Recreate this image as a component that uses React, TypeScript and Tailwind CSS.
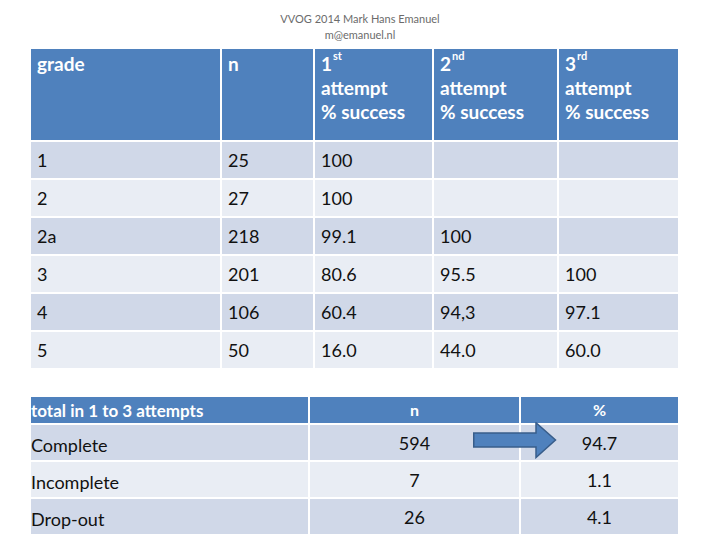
import React from "react";

const font = { fontFamily: "Lato, 'Open Sans', sans-serif" };

const rows = [
  ["1", "25", "100", "", ""],
  ["2", "27", "100", "", ""],
  ["2a", "218", "99.1", "100", ""],
  ["3", "201", "80.6", "95.5", "100"],
  ["4", "106", "60.4", "94,3", "97.1"],
  ["5", "50", "16.0", "44.0", "60.0"],
];

function Attempt({ num, sup }: { num: string; sup: string }) {
  return (
    <div className="bg-[#4f81bd] text-white font-bold text-[19px] leading-[24px] pt-[3px] pl-[6px]">
      <div>
        {num}
        <sup className="text-[11px] font-bold relative top-[-3px] ml-[1px] align-top leading-[14px]">{sup}</sup>
      </div>
      <div>attempt</div>
      <div>% success</div>
    </div>
  );
}

export default function App() {
  return (
    <div className="w-[720px] h-[540px] bg-white overflow-hidden relative" style={font}>
      <div className="pt-[11px] text-center text-[11px] leading-[16px] text-[#6b6b6b]">
        <div>VVOG 2014 Mark Hans Emanuel</div>
        <div>m@emanuel.nl</div>
      </div>

      <div className="pl-[31px] mt-[6px]">
        <div className="grid grid-cols-[189px_91px_117px_123px_119px] grid-rows-[91px_36px_36px_36px_36px_36px_36px] gap-[2px] w-[647px]">
          <div className="bg-[#4f81bd] text-white font-bold text-[19px] leading-[24px] pt-[3px] pl-[6px]">grade</div>
          <div className="bg-[#4f81bd] text-white font-bold text-[19px] leading-[24px] pt-[3px] pl-[6px]">n</div>
          <Attempt num="1" sup="st" />
          <Attempt num="2" sup="nd" />
          <Attempt num="3" sup="rd" />
          {rows.map((r, i) =>
            r.map((c, j) => (
              <div
                key={`${i}-${j}`}
                className={`${i % 2 === 0 ? "bg-[#d0d8e8]" : "bg-[#e9edf4]"} flex items-center pl-[6px] pt-[1px] text-[18px] text-[#111]`}
              >
                {c}
              </div>
            ))
          )}
        </div>

        <div className="relative mt-[29px] w-[647px]">
          <div className="grid grid-cols-[277px_209px_157px] grid-rows-[26px_35px_35px_35px] gap-[2px]">
            <div className="bg-[#4f81bd] text-white font-bold text-[17px] flex items-center pt-[2px]">total in 1 to 3 attempts</div>
            <div className="bg-[#4f81bd] text-white font-bold text-[16px] flex items-center justify-center">n</div>
            <div className="bg-[#4f81bd] text-white font-bold text-[16px] flex items-center justify-center">%</div>

            <div className="bg-[#d0d8e8] flex items-center pt-[6px] text-[18px] text-[#111]">Complete</div>
            <div className="bg-[#d0d8e8] flex items-center justify-center pt-[1px] text-[18px] text-[#111]">594</div>
            <div className="bg-[#d0d8e8] flex items-center justify-center pt-[1px] text-[18px] text-[#111]">94.7</div>

            <div className="bg-[#e9edf4] flex items-center pt-[6px] text-[18px] text-[#111]">Incomplete</div>
            <div className="bg-[#e9edf4] flex items-center justify-center pt-[1px] text-[18px] text-[#111]">7</div>
            <div className="bg-[#e9edf4] flex items-center justify-center pt-[1px] text-[18px] text-[#111]">1.1</div>

            <div className="bg-[#d0d8e8] flex items-center pt-[6px] text-[18px] text-[#111]">Drop-out</div>
            <div className="bg-[#d0d8e8] flex items-center justify-center pt-[1px] text-[18px] text-[#111]">26</div>
            <div className="bg-[#d0d8e8] flex items-center justify-center pt-[1px] text-[18px] text-[#111]">4.1</div>
          </div>

          <svg className="absolute left-[442px] top-[25px]" width="84" height="37" viewBox="0 0 84 37">
            <polygon
              points="0.75,11 63,11 63,0.75 82.5,18 63,35.5 63,25 0.75,25"
              fill="#4f81bd"
              stroke="#385d8a"
              strokeWidth="1.5"
              strokeLinejoin="miter"
            />
          </svg>
        </div>
      </div>
    </div>
  );
}
